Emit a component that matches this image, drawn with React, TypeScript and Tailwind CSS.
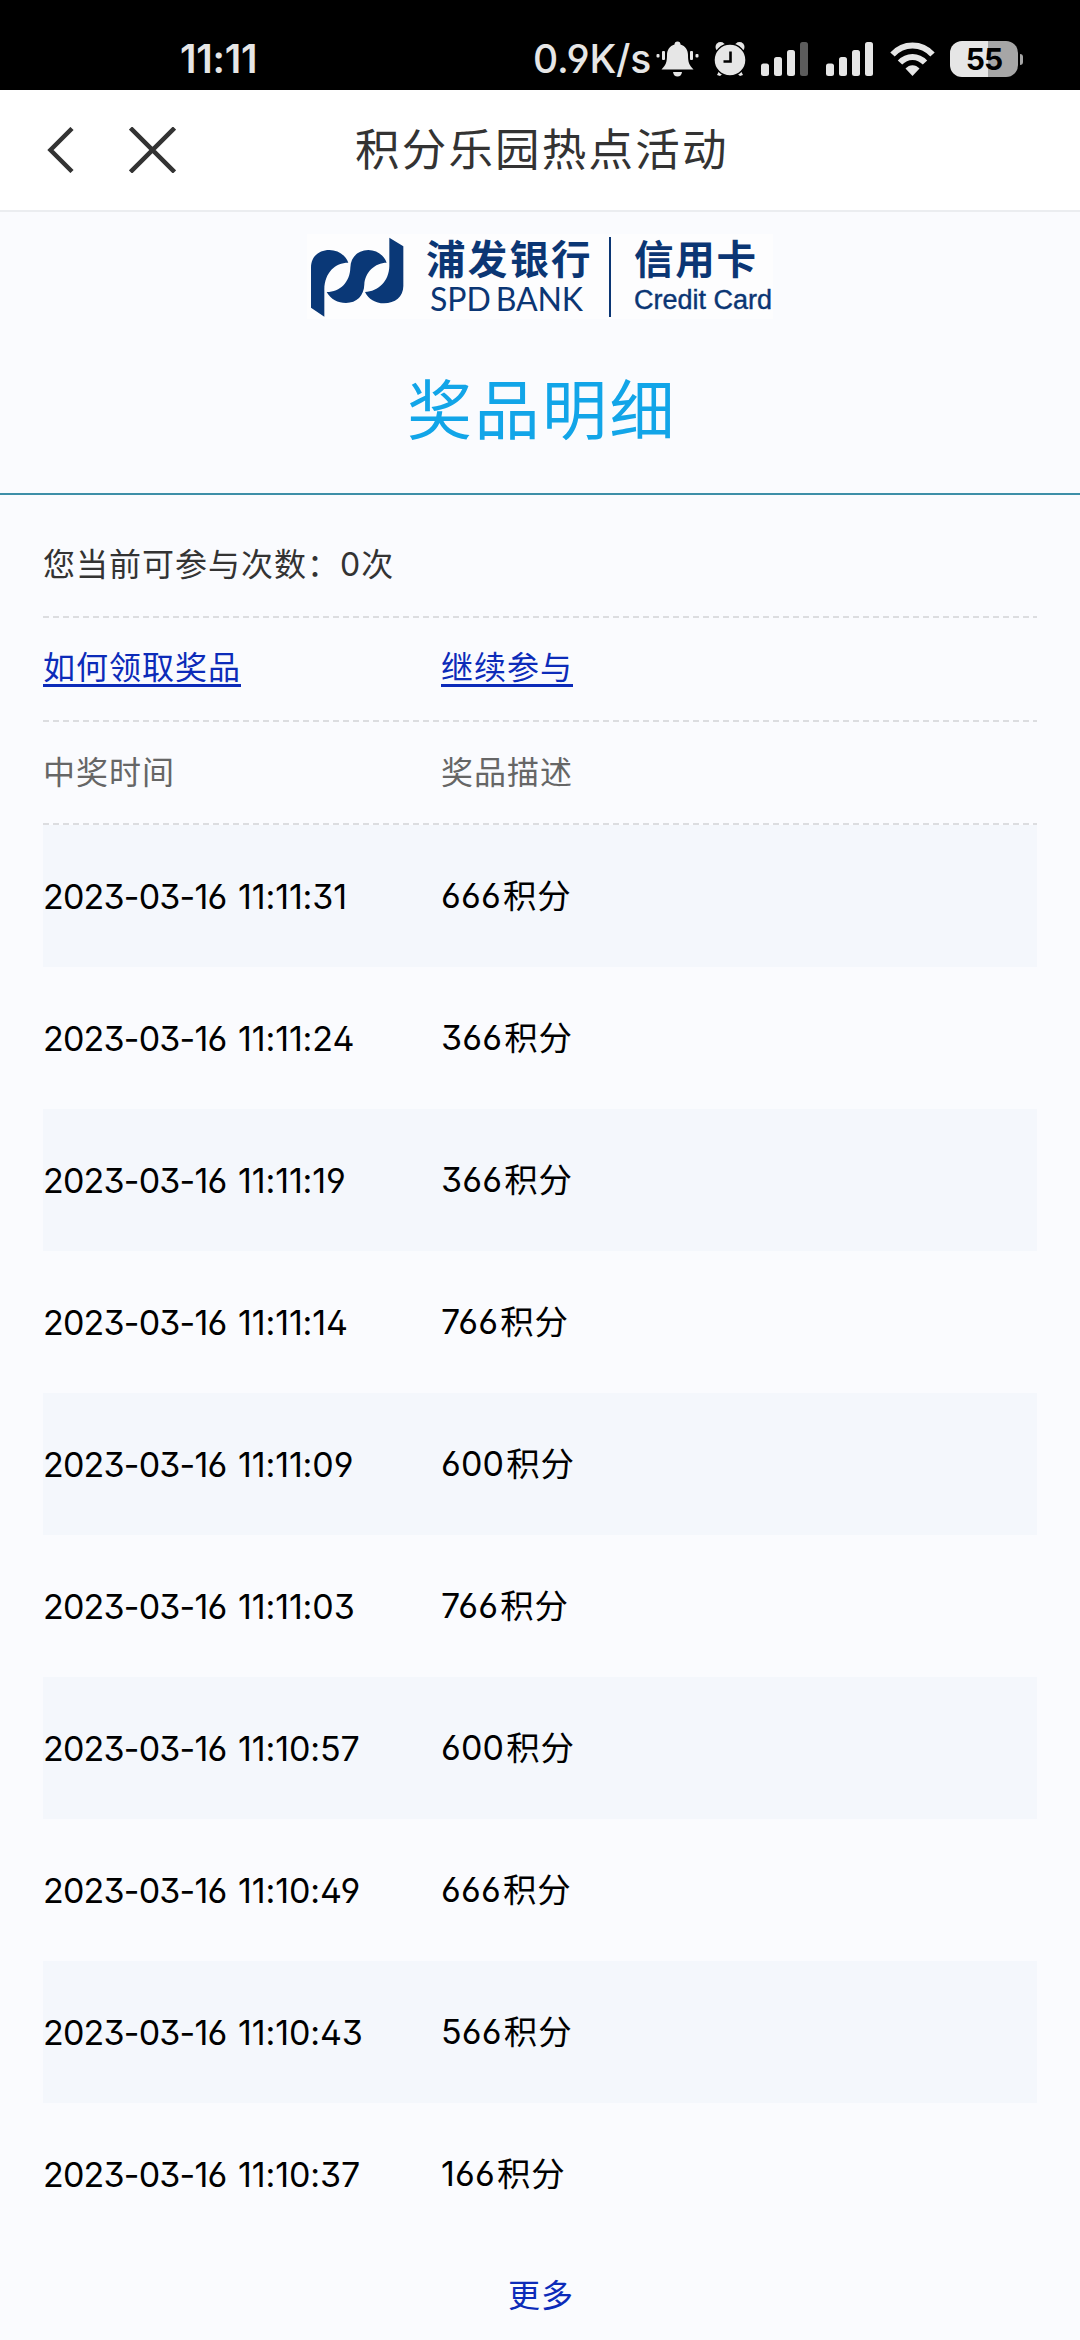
const records = [
  { date: '2023-03-16', time: '11:11:31', points: '666' },
  { date: '2023-03-16', time: '11:11:24', points: '366' },
  { date: '2023-03-16', time: '11:11:19', points: '366' },
  { date: '2023-03-16', time: '11:11:14', points: '766' },
  { date: '2023-03-16', time: '11:11:09', points: '600' },
  { date: '2023-03-16', time: '11:11:03', points: '766' },
  { date: '2023-03-16', time: '11:10:57', points: '600' },
  { date: '2023-03-16', time: '11:10:49', points: '666' },
  { date: '2023-03-16', time: '11:10:43', points: '566' },
  { date: '2023-03-16', time: '11:10:37', points: '166' },
]

function Signal({ weak = false }: { weak?: boolean }) {
  return (
    <svg className="h-[34px] w-[47px]" viewBox="0 0 47 34" fill="#e6e6e6">
      <rect x="0" y="21.5" width="8" height="12.5" rx="2.5" />
      <rect x="13" y="15" width="8" height="19" rx="2.5" />
      <rect x="26" y="8" width="8" height="26" rx="2.5" />
      <rect x="39" y="0" width="8" height="34" rx="2.5" fill={weak ? '#5c5c5c' : '#e6e6e6'} />
    </svg>
  )
}

function StatusBar() {
  return (
    <div className="flex h-[90px] items-start bg-black pt-[41px] font-['Inter',sans-serif] text-[#e6e6e6]">
      <span className="ml-[180px] w-[353px] text-[39px] font-semibold leading-[36px] tracking-[-0.2px]">11:11</span>
      <span className="w-[123px] whitespace-nowrap text-[39px] font-medium leading-[36px] tracking-[-0.2px] [font-feature-settings:'cv04','ss01']">0.9K/s</span>
      <svg className="h-[36px] w-[43px]" viewBox="0 0 43 36" fill="#e6e6e6">
        <path d="M21.5 0.5c2 0 3 1.2 3 3 5 1.500 7.500 5.500 7.500 10.500 0 7 1 10 5.500 14.500H5.500C10 24 11 21 11 14c0-5 2.500-9 7.500-10.500 0-1.800 1-3 3-3z" />
        <path d="M17 31h9c-.5 3-2 4.500-4.500 4.500S17.500 34 17 31z" />
        <rect x="6" y="10" width="3" height="9" rx="1" />
        <rect x="0.500" y="13" width="3" height="3.500" rx="1" />
        <rect x="34" y="10" width="3" height="9" rx="1" />
        <rect x="39.500" y="13" width="3" height="3.500" rx="1" />
      </svg>
      <svg className="ml-[15px] h-[36px] w-[32px]" viewBox="0 0 32 36">
        <g fill="#e6e6e6">
          <circle cx="6.500" cy="6" r="5" />
          <circle cx="25.500" cy="6" r="5" />
          <path d="M6 28l-3 6 3 1 5-4zM26 28l3 6-3 1-5-4z" />
          <circle cx="16" cy="19" r="16" stroke="#000" strokeWidth="1.400" />
        </g>
        <path d="M16.500 10.500v10H9.500" fill="none" stroke="#000" strokeWidth="2.600" />
      </svg>
      <div className="ml-[15px] mt-px"><Signal weak /></div>
      <div className="ml-[18px] mt-px"><Signal /></div>
      <svg className="ml-[17px] mt-px h-[34px] w-[45px]" viewBox="0 0 45 34" fill="none" stroke="#e6e6e6">
        <path d="M2.500 12.500C13.500 0.500 31.500 0.500 42.500 12.500" strokeWidth="6" />
        <path d="M10 20.500c7-7.500 18-7.500 25 0" strokeWidth="6" />
        <path d="M15.500 26.500c4-4.500 10-4.500 14 0L22.500 34z" fill="#e6e6e6" stroke="none" />
      </svg>
      <div className="ml-[15px] flex h-[36px] w-[68px] items-center justify-center rounded-[12px] bg-[linear-gradient(90deg,#e6e6e6_38px,#a6a6a6_38px)] text-[30px] font-bold leading-none tracking-[-1px] text-black">
        55
      </div>
      <div className="ml-[2px] mt-[13px] h-[11px] w-[3px] rounded-r-full bg-[#a6a6a6]" />
    </div>
  )
}

function NavBar() {
  return (
    <div className="flex h-[122px] items-center border-b-2 border-[#ebedf0] bg-white">
      <svg className="ml-[47px] h-[46px] w-[27px]" viewBox="0 0 27 46" fill="none" stroke="#333" strokeWidth="4.500">
        <path d="M25 1.500L3.500 23 25 44.500" />
      </svg>
      <svg className="ml-[55px] h-[46px] w-[47px]" viewBox="0 0 47 46" fill="none" stroke="#333" strokeWidth="4.500">
        <path d="M1.500 1L45.500 45M45.500 1L1.500 45" />
      </svg>
      <h1 className="ml-[179px] text-[44.500px] leading-[60px] tracking-[2.200px] text-[#333]">积分乐园热点活动</h1>
    </div>
  )
}

function BankLogo() {
  return (
    <div className="mx-auto flex h-[85px] w-[466px] items-start bg-[#fdfdfe] pl-[3px] pt-[3px] text-[#0b3674]">
      <svg className="h-[80px] w-[94px]" viewBox="30 33 282 240" fill="#0a3877">
        <path d="M33 245V125C33 92 56 72 88 72c25 0 48 14 57 38-40 0-71 30-72 80v82z" />
        <path d="M205 72c-33 1-53 22-54 53-1 42-30 73-71 73 12 22 34 33 58 33 32 0 54-21 55-56 2-36 32-65 67-65-9-24-31-38-55-38z" />
        <path d="M195 198c40-2 72-32 73-78V35l42 26v119c0 32-25 52-58 52-26 0-47-13-57-34z" />
      </svg>
      <div className="ml-[22px] mt-[3px] w-[183px] whitespace-nowrap">
        <div className="text-[39.500px] font-bold leading-[40px] tracking-[2.200px]">浦发银行</div>
        <div className="ml-[4px] mt-[2px] font-['Lato',sans-serif] text-[32px] leading-[34px] tracking-[-0.100px] [word-spacing:-3px]">SPD BANK</div>
      </div>
      <div className="h-[80px] w-[2px] bg-[#0b3674]" />
      <div className="ml-[23px] mt-[3px] whitespace-nowrap">
        <div className="text-[39.500px] font-bold leading-[40px] tracking-[1.800px]">信用卡</div>
        <div className="mt-[2px] font-['Liberation_Sans',sans-serif] text-[27px] leading-[36px] [-webkit-text-stroke:0.400px]">Credit Card</div>
      </div>
    </div>
  )
}

function Dashes() {
  return <div className="h-[2px] bg-[repeating-linear-gradient(90deg,#dcdde0_0_6px,transparent_6px_10px)]" />
}

export default function App() {
  return (
    <div className="h-[2340px] w-[1080px] overflow-hidden bg-[#fafbfe] font-['Inter','Noto_Sans_CJK_SC',sans-serif]">
      <StatusBar />
      <NavBar />
      <header className="h-[283px] border-b-2 border-[#3d8fa8] pt-[22px]">
        <BankLogo />
        <h2 className="mt-[45px] pl-[4px] text-center text-[65px] leading-[94px] tracking-[2.500px] text-[#12a5e8]">奖品明细</h2>
      </header>
      <main className="mx-[43px] text-[32px] tracking-[1px]">
        <div className="flex h-[121px] items-center pt-[18px] text-[#333]">您当前可参与次数：0次</div>
        <Dashes />
        <div className="flex h-[102px] items-center text-[#0c2bb9]">
          <a className="mr-[200px] border-b-[3px] border-[#0c2bb9] leading-[33px]">如何领取奖品</a>
          <a className="border-b-[3px] border-[#0c2bb9] leading-[33px]">继续参与</a>
        </div>
        <Dashes />
        <div className="flex h-[101px] items-center text-[#666]">
          <span className="w-[398px]">中奖时间</span>
          <span>奖品描述</span>
        </div>
        <Dashes />
        {records.map((record) => (
          <div
            key={record.time}
            className="flex h-[142px] items-center text-[34px] text-black odd:bg-[#f4f7fc] [font-feature-settings:'cv03','cv04','cv09','ss01']"
          >
            <span className="w-[195px] tracking-[-0.800px]">{record.date}</span>
            <span className="w-[203px] tracking-[-0.100px]">{record.time}</span>
            <span className="tracking-[0.200px]">
              {record.points}
              <span className="ml-[2px] text-[33.500px] tracking-[0.800px]">积分</span>
            </span>
          </div>
        ))}
        <div className="mt-[27px] pl-[2px] text-center text-[#0c2bb9]">更多</div>
      </main>
    </div>
  )
}
